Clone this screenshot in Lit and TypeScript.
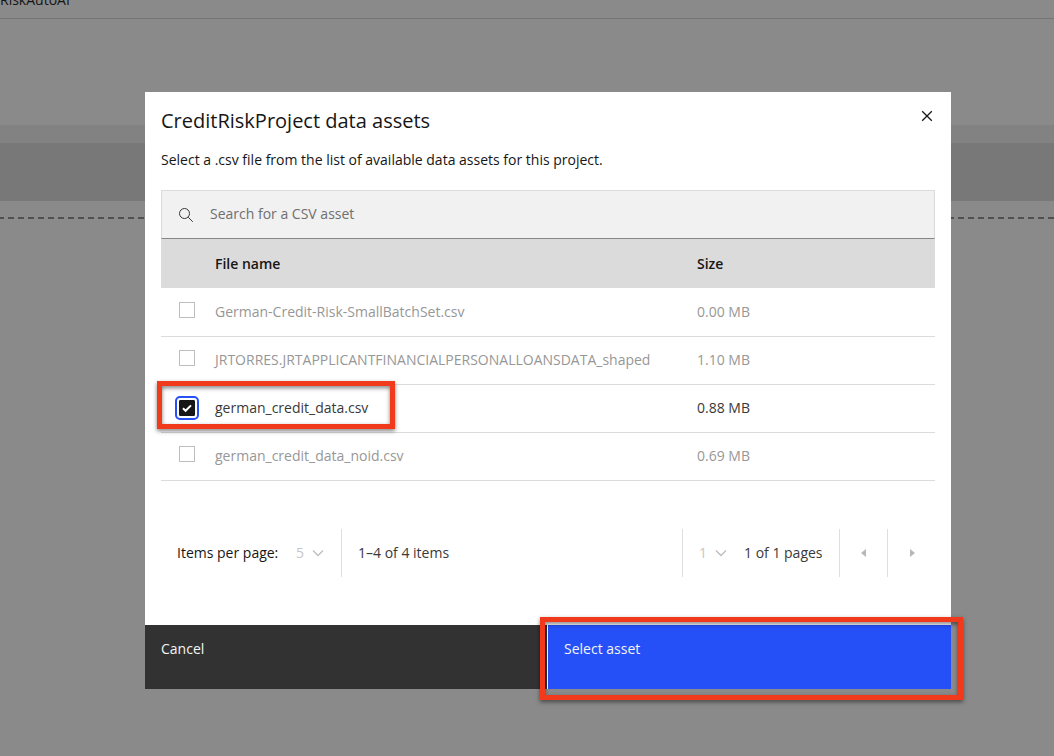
import { LitElement, html, css, nothing } from "lit";
import { customElement, state } from "lit/decorators.js";

interface Asset {
  id: string;
  name: string;
  size: string;
}

const ASSETS: Asset[] = [
  { id: "small-batch", name: "German-Credit-Risk-SmallBatchSet.csv", size: "0.00 MB" },
  { id: "loans", name: "JRTORRES.JRTAPPLICANTFINANCIALPERSONALLOANSDATA_shaped", size: "1.10 MB" },
  { id: "german", name: "german_credit_data.csv", size: "0.88 MB" },
  { id: "german-noid", name: "german_credit_data_noid.csv", size: "0.69 MB" },
];

@customElement("asset-dialog")
export class AssetDialog extends LitElement {
  @state() private selected = "german";

  static styles = css`
    :host {
      display: block;
      background: #fff;
      color: #161616;
      font-size: 14px;
      line-height: 20px;
    }
    * {
      box-sizing: border-box;
    }
    button,
    input,
    select {
      font: inherit;
      color: inherit;
      margin: 0;
      border-radius: 0;
    }
    .body {
      padding: 16px 16px 48px;
    }
    .head {
      display: flex;
      justify-content: space-between;
      align-items: flex-start;
      margin-bottom: 16px;
    }
    .title {
      margin: 0;
      font-size: 20px;
      line-height: 26px;
      font-weight: 400;
    }
    .close {
      display: flex;
      padding: 0;
      border: 0;
      background: none;
    }
    .intro {
      margin: 0 0 20px;
    }
    .search {
      display: flex;
      align-items: center;
      gap: 16px;
      height: 49px;
      padding-left: 16px;
      background: #f1f1f1;
      border: 1px solid #dbdbdb;
      border-bottom-color: #868686;
    }
    .search input {
      flex: 1;
      min-width: 0;
      padding: 0 0 2px;
      border: 0;
      outline: 0;
      background: none;
    }
    .search input::placeholder {
      color: #6f6f6f;
      opacity: 1;
    }
    .assets {
      width: 100%;
      border-collapse: separate;
      border-spacing: 0;
      table-layout: fixed;
    }
    .col-pick {
      width: 54px;
    }
    .col-name {
      width: 482px;
    }
    th,
    td {
      padding: 0;
      text-align: left;
      vertical-align: middle;
    }
    th {
      height: 50px;
      background: #dbdbdb;
      border-bottom: 1px solid #fff;
      font-weight: 600;
    }
    td {
      height: 48px;
      padding-bottom: 2px;
      border-bottom: 1px solid #dbdbdb;
      color: #979797;
      white-space: nowrap;
    }
    .row {
      position: relative;
    }
    .row.on td {
      color: #393939;
    }
    td.pick {
      padding: 13px 0 0 18px;
      vertical-align: top;
    }
    .row.on td.pick {
      padding-top: 15px;
    }
    .box {
      appearance: none;
      display: block;
      width: 16px;
      height: 16px;
      border: 1px solid #bebebe;
      background: #fff;
    }
    .box:checked {
      border-color: #161616;
      background: #161616
        url("data:image/svg+xml,%3Csvg xmlns='http://www.w3.org/2000/svg' viewBox='0 0 14 14'%3E%3Cpath d='M3 7.2l2.6 2.6L11 4.4' fill='none' stroke='white' stroke-width='2'/%3E%3C/svg%3E")
        center / 14px 14px no-repeat;
      outline: 2px solid #2450f8;
      outline-offset: 2px;
      border-radius: 1px;
    }
    .mark {
      position: absolute;
      border: 5px solid #f03a1b;
      filter: drop-shadow(0 2px 2px rgba(0, 0, 0, 0.5));
      pointer-events: none;
    }
    .mark.file {
      left: -4px;
      top: -4px;
      width: 238px;
      height: 48px;
    }
    .mark.submit {
      inset: -8px -12px -11px -8px;
    }
    .pager {
      display: flex;
      height: 48px;
      margin-top: 48px;
      color: #393939;
    }
    .per-page {
      display: flex;
      align-items: center;
      justify-content: space-between;
      width: 181px;
      padding-left: 16px;
      border-right: 1px solid #dfdfdf;
    }
    .per-page label {
      color: #161616;
    }
    .range {
      flex: 1;
      align-self: center;
      padding-left: 16px;
    }
    .drop {
      position: relative;
      display: flex;
      align-items: center;
      width: 45px;
      color: #bebebe;
    }
    .drop select {
      appearance: none;
      width: 100%;
      padding: 0;
      border: 0;
      background: none;
      opacity: 1;
      color: #c6c6c6;
    }
    .drop svg {
      position: absolute;
      left: 14px;
      pointer-events: none;
    }
    .pages {
      display: flex;
      align-items: center;
      width: 157px;
      padding-left: 16px;
      border-left: 1px solid #dfdfdf;
      white-space: nowrap;
    }
    .step {
      display: grid;
      place-items: center;
      width: 48px;
      padding: 0;
      border: 0;
      border-left: 1px solid #dfdfdf;
      background: none;
      color: #b8b8b8;
    }
    .foot {
      display: grid;
      grid-template-columns: 1fr 1fr;
      height: 64px;
    }
    .action {
      position: relative;
      display: block;
      width: 100%;
      height: 64px;
      padding: 0 16px 16px;
      border: 0;
      text-align: left;
      color: #f4f4f4;
    }
    .cancel {
      background: #323232;
      border-right: 1px solid #fff;
    }
    .primary {
      background: #2550f8;
    }
  `;

  private pick(id: string) {
    this.selected = this.selected === id ? "" : id;
  }

  private chevron() {
    return html`<svg
      width="16"
      height="16"
      viewBox="0 0 16 16"
      fill="none"
      stroke="currentColor"
      stroke-width="1.3"
      aria-hidden="true"
    >
      <path d="M3 5.5l5 5 5-5" />
    </svg>`;
  }

  private row(a: Asset) {
    const on = a.id === this.selected;
    return html`<tr class="row ${on ? "on" : ""}">
      <td class="pick">
        <input class="box" type="checkbox" id=${a.id} .checked=${on} @change=${() => this.pick(a.id)} />
        ${on ? html`<span class="mark file"></span>` : nothing}
      </td>
      <td><label for=${a.id}>${a.name}</label></td>
      <td>${a.size}</td>
    </tr>`;
  }

  render() {
    return html`
      <div class="body">
        <div class="head">
          <h2 class="title">CreditRiskProject data assets</h2>
          <button class="close" aria-label="Close">
            <svg width="16" height="16" viewBox="0 0 16 16" fill="none" stroke="currentColor" stroke-width="1.3">
              <path d="M3.2 3.2l9.6 9.6M12.8 3.2l-9.6 9.6" />
            </svg>
          </button>
        </div>
        <p class="intro">Select a .csv file from the list of available data assets for this project.</p>
        <div class="search">
          <svg width="16" height="16" viewBox="0 0 16 16" fill="none" stroke="#393939" aria-hidden="true">
            <circle cx="6.5" cy="6.5" r="5" />
            <path d="M10.2 10.2l4.6 4.6" />
          </svg>
          <input type="text" aria-label="Search for a CSV asset" placeholder="Search for a CSV asset" />
        </div>
        <table class="assets">
          <colgroup>
            <col class="col-pick" />
            <col class="col-name" />
            <col />
          </colgroup>
          <thead>
            <tr>
              <th></th>
              <th scope="col">File name</th>
              <th scope="col">Size</th>
            </tr>
          </thead>
          <tbody>
            ${ASSETS.map((a) => this.row(a))}
          </tbody>
        </table>
        <div class="pager">
          <div class="per-page">
            <label for="per-page">Items per page:</label>
            <span class="drop"
              ><select id="per-page" disabled>
                <option>5</option></select
              >${this.chevron()}</span
            >
          </div>
          <span class="range">1–4 of 4 items</span>
          <div class="pages">
            <span class="drop"
              ><select id="page" aria-label="Page" disabled>
                <option>1</option></select
              >${this.chevron()}</span
            >
            <label for="page">1 of 1 pages</label>
          </div>
          <button class="step" aria-label="Previous page" disabled>
            <svg width="16" height="16" viewBox="0 0 16 16" fill="currentColor"><path d="M10 4v8L5 8z" /></svg>
          </button>
          <button class="step" aria-label="Next page" disabled>
            <svg width="16" height="16" viewBox="0 0 16 16" fill="currentColor"><path d="M6 4v8l5-4z" /></svg>
          </button>
        </div>
      </div>
      <div class="foot">
        <button class="action cancel">Cancel</button>
        <button class="action primary">Select asset<span class="mark submit"></span></button>
      </div>
    `;
  }
}

@customElement("app-root")
export class AppRoot extends LitElement {
  static styles = css`
    :host {
      display: block;
      position: relative;
      min-height: 100vh;
      overflow: hidden;
      background: #8a8a8a;
      color: #161616;
      font-family: "Open Sans", "Noto Sans", sans-serif;
      font-size: 14px;
      line-height: 20px;
    }
    .bar {
      display: flex;
      align-items: flex-end;
      height: 18px;
      box-sizing: content-box;
      border-bottom: 1px solid #757575;
    }
    .name {
      padding-bottom: 8px;
    }
    .space {
      height: 106px;
    }
    .strip {
      height: 18px;
      background: #828282;
    }
    .band {
      height: 58px;
      background: #787878;
    }
    .dashes {
      height: 2px;
      margin-top: 16px;
      background: repeating-linear-gradient(90deg, #505050 0 4px, transparent 4px 8px, #505050 8px 10px);
    }
    .overlay {
      position: absolute;
      inset: 0;
      padding: 92px 103px 0 145px;
    }
  `;

  render() {
    return html`
      <div class="bar"><span class="name">RiskAutoAI</span></div>
      <div class="space"></div>
      <div class="strip"></div>
      <div class="band"></div>
      <div class="dashes"></div>
      <div class="overlay">
        <asset-dialog role="dialog" aria-modal="true" aria-label="CreditRiskProject data assets"></asset-dialog>
      </div>
    `;
  }
}
